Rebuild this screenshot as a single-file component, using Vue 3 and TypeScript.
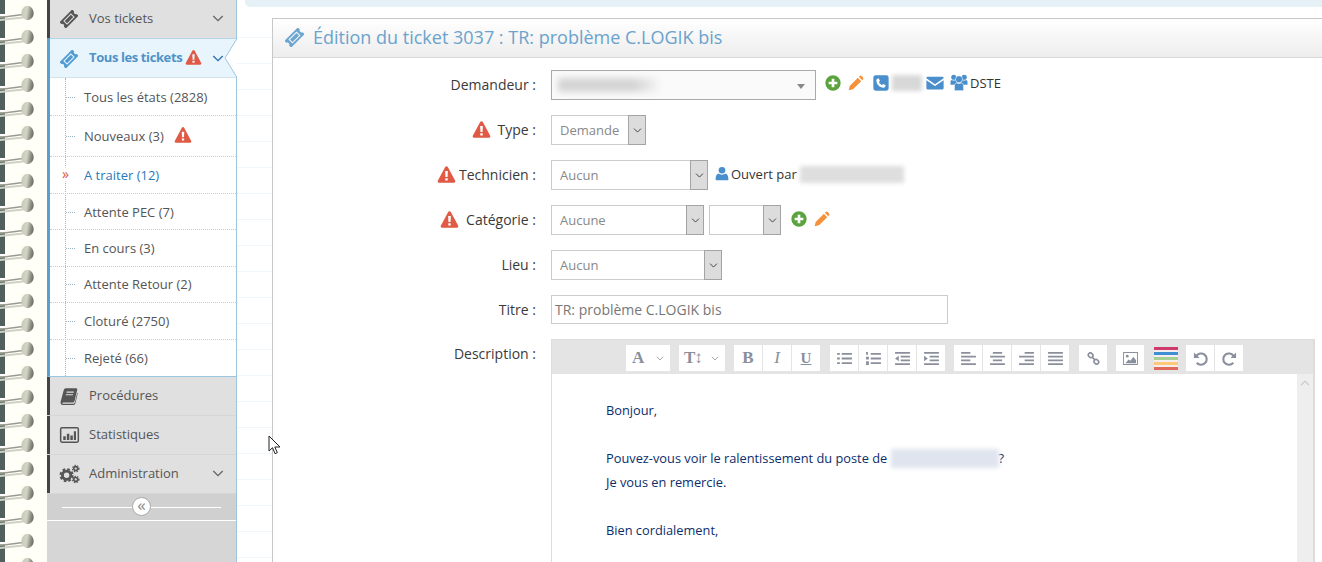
<script setup lang="ts">
interface SubItem { label: string; h: number; warn?: boolean; active?: boolean }
const subItems: SubItem[] = [
  { label: 'Tous les états (2828)', h: 38 },
  { label: 'Nouveaux (3)', h: 41, warn: true },
  { label: 'A traiter (12)', h: 37, active: true },
  { label: 'Attente PEC (7)', h: 36.4 },
  { label: 'En cours (3)', h: 36.4 },
  { label: 'Attente Retour (2)', h: 36.4 },
  { label: 'Cloturé (2750)', h: 36.4 },
  { label: 'Rejeté (66)', h: 36.4 },
]
</script>

<template>
  <div class="page">
    <svg class="defs" width="0" height="0">
      <symbol id="i-ticket" viewBox="0 0 24 24">
        <g transform="rotate(-45 12 12)">
          <path fill-rule="evenodd" d="M0 6h24v3.600a2.500 2.500 0 0 0 0 4.800V18H0v-3.600a2.500 2.500 0 0 0 0-4.800z M4.800 8.400v7.200h14.400V8.400z" />
          <rect x="6.200" y="9.800" width="11.600" height="4.400" />
        </g>
      </symbol>
      <symbol id="i-warn" viewBox="0 0 24 24">
        <path fill-rule="evenodd" d="M12 1.500c.7 0 1.300.4 1.600.9l10 18.600c.6 1.100-.2 2.500-1.500 2.500H1.900c-1.300 0-2.100-1.400-1.500-2.500l10-18.600c.3-.5.900-.9 1.600-.9z M10.200 8h3.600l-.4 8h-2.800z M10.400 17.600h3.200v3h-3.200z" />
      </symbol>
      <symbol id="i-plus" viewBox="0 0 24 24">
        <path fill-rule="evenodd" d="M12 .5a11.500 11.500 0 1 0 0 23a11.500 11.500 0 0 0 0-23z M10 5.500h4v4.500h4.500v4H14v4.500h-4V14H5.500v-4H10z" />
      </symbol>
      <symbol id="i-pencil" viewBox="0 0 24 24">
        <path d="M2.500 16.500 14.800 4.200l5 5L7.500 21.500 1 23z M16.300 2.700l1.300-1.300a2 2 0 0 1 2.800 0l2.200 2.200a2 2 0 0 1 0 2.800l-1.300 1.300z" />
      </symbol>
      <symbol id="i-phone" viewBox="0 0 24 24">
        <path fill-rule="evenodd" d="M4 .5h16A3.500 3.500 0 0 1 23.500 4v16a3.500 3.500 0 0 1-3.500 3.500H4A3.500 3.500 0 0 1 .5 20V4A3.500 3.500 0 0 1 4 .5z M8.500 5 6.800 5.600C5.500 6.200 5 7.200 5 8.500 5.300 14 10 18.700 15.500 19c1.300 0 2.300-.5 2.900-1.800l.6-1.700-4-2-1.500 1.700c-2-.8-3.900-2.700-4.700-4.700L10.500 9z" />
      </symbol>
      <symbol id="i-mail" viewBox="0 0 24 24">
        <path d="M2 3.500h20A1.500 1.500 0 0 1 23.500 5v.8L12 13.500.5 5.800V5A1.500 1.500 0 0 1 2 3.500z M.5 8.300 12 16l11.500-7.700V19a1.500 1.500 0 0 1-1.500 1.500H2A1.500 1.500 0 0 1 .5 19z" />
      </symbol>
      <symbol id="i-users" viewBox="0 0 24 24">
        <circle cx="4.600" cy="4.500" r="3.600" />
        <circle cx="19.400" cy="4.500" r="3.600" />
        <path d="M0 15v-3.500C0 9.500 1 8.500 2 8.500c1.600 1 3.400 1 5 0 1 0 2 1 2 3V15z M15 15v-3.500c0-2 1-3 2-3 1.600 1 3.400 1 5 0 1 0 2 1 2 3V15z" />
        <circle cx="12" cy="7.500" r="5" stroke="#fff" stroke-width=".8" />
        <path d="M5.500 23.500v-6c0-3 1.300-4.700 3.200-5 1.900 1.300 4.700 1.300 6.600 0 1.900.3 3.200 2 3.200 5v6z" stroke="#fff" stroke-width=".8" />
      </symbol>
      <symbol id="i-user" viewBox="0 0 24 24">
        <circle cx="12" cy="6.500" r="5.700" />
        <path d="M2.500 23.500c-.8 0-1.500-.6-1.500-1.500 0-5 1.500-9 5-9.800 1.500 1.300 3.700 2 6 2s4.500-.7 6-2c3.500.8 5 4.800 5 9.800 0 .9-.7 1.500-1.500 1.500z" />
      </symbol>
      <symbol id="i-book" viewBox="0 0 24 24">
        <path fill-rule="evenodd" d="M8 1.500h13.500c1.200 0 1.800 1 1.500 2l-3.600 15c-.3 1.200-1.100 2-2.400 2H4.500c-1 0-1.500.5-1.500 1s.5.9 1.500.9h13c1.200 0 2-.7 2.400-2L23 7.600l.7.800-3.200 13.400c-.3 1.300-1.400 2.200-2.700 2.200H4c-2.200 0-3.800-2-3.200-4.500L5 4c.4-1.500 1.500-2.500 3-2.500z M9 6l-.4 1.600h9.500L18.500 6z M8 9.500l-.4 1.600h9.500l.4-1.600z" />
      </symbol>
      <symbol id="i-stats" viewBox="0 0 24 24">
        <path fill-rule="evenodd" d="M3 2.500h18a2.500 2.500 0 0 1 2.500 2.500v14a2.500 2.500 0 0 1-2.500 2.500H3A2.500 2.500 0 0 1 .5 19V5A2.500 2.500 0 0 1 3 2.500z M3 4.300a.7.700 0 0 0-.7.700v14c0 .4.300.7.700.7h18c.4 0 .7-.3.700-.7V5a.7.700 0 0 0-.7-.7z" />
        <path d="M4.500 13.500h3v4.500h-3z M8.800 10.500h3V18h-3z M13 12.500h3V18h-3z M17.200 7.500h2.600V18h-2.600z" />
      </symbol>
      <symbol id="i-cogs" viewBox="0 0 24 24">
        <circle cx="8.500" cy="13.500" r="5" fill="none" stroke="currentColor" stroke-width="3.400" />
        <circle cx="8.500" cy="13.500" r="7.300" fill="none" stroke="currentColor" stroke-width="2.400" stroke-dasharray="3.200 2.530" />
        <circle cx="19.500" cy="5.500" r="2.300" fill="none" stroke="currentColor" stroke-width="2" />
        <circle cx="19.500" cy="5.500" r="3.800" fill="none" stroke="currentColor" stroke-width="1.500" stroke-dasharray="1.700 1.480" />
        <circle cx="19.500" cy="18.500" r="2.300" fill="none" stroke="currentColor" stroke-width="2" />
        <circle cx="19.500" cy="18.500" r="3.800" fill="none" stroke="currentColor" stroke-width="1.500" stroke-dasharray="1.700 1.480" />
      </symbol>
      <symbol id="i-chev" viewBox="0 0 14 8">
        <path d="M1.500 1 7 6.500 12.500 1" fill="none" stroke="currentColor" stroke-width="1.600" />
      </symbol>
    </svg>

    <svg class="spiral" width="47" height="562">
      <defs>
        <linearGradient id="ball" x1="0" x2="1" y1=".3" y2=".5">
          <stop offset="0" stop-color="#c8cab8" />
          <stop offset=".45" stop-color="#d2d4c4" />
          <stop offset=".75" stop-color="#92948a" />
          <stop offset="1" stop-color="#66685e" />
        </linearGradient>
        <filter id="soft" x="-20%" y="-20%" width="140%" height="140%">
          <feGaussianBlur stdDeviation=".5" />
        </filter>
        <pattern id="ring" width="47" height="24" patternUnits="userSpaceOnUse" y="0">
          <rect width="47" height="24" fill="#fffff8" />
          <rect width="5" height="24" fill="#50605c" />
          <rect y="14" width="5" height="2.500" fill="#fff" />
          <g filter="url(#soft)">
            <path d="M0 17.500 23 14.500" stroke="#9a9c8e" stroke-width="1.600" />
            <path d="M0 20 23 17.500" stroke="#d0d2c6" stroke-width="2" />
            <ellipse cx="27.500" cy="13" rx="6.200" ry="7.200" fill="url(#ball)" />
          </g>
        </pattern>
      </defs>
      <rect width="47" height="562" fill="url(#ring)" />
    </svg>

    <aside class="sidebar">
      <div class="nav-item first">
        <svg class="nav-ico"><use href="#i-ticket" /></svg>
        <span class="nav-label">Vos tickets</span>
        <svg class="chev"><use href="#i-chev" /></svg>
      </div>

      <div class="nav-active">
        <svg class="nav-ico blue"><use href="#i-ticket" /></svg>
        <span class="active-label">Tous les tickets</span>
        <svg class="warn-s"><use href="#i-warn" /></svg>
        <svg class="chev navy"><use href="#i-chev" /></svg>
        <svg class="notch" width="13" height="39" viewBox="0 0 13 39">
          <path d="M13 0 1 19.500 13 39z" fill="#fff" />
          <path d="M13 0 1 19.500 13 39" fill="none" stroke="#9cc5e0" />
        </svg>
      </div>

      <ul class="sub">
        <li
          v-for="s in subItems"
          :key="s.label"
          class="sub-row"
          :class="{ on: s.active }"
          :style="{ height: s.h + 'px' }"
        >
          <span v-if="s.active" class="marks">»</span>
          <span v-else class="tick"></span>
          <span>{{ s.label }}</span>
          <svg v-if="s.warn" class="warn-n"><use href="#i-warn" /></svg>
        </li>
      </ul>

      <div class="nav-item">
        <svg class="nav-ico"><use href="#i-book" /></svg>
        <span class="nav-label">Procédures</span>
      </div>
      <div class="nav-item">
        <svg class="nav-ico wide"><use href="#i-stats" /></svg>
        <span class="nav-label">Statistiques</span>
      </div>
      <div class="nav-item">
        <svg class="nav-ico wide"><use href="#i-cogs" /></svg>
        <span class="nav-label">Administration</span>
        <svg class="chev"><use href="#i-chev" /></svg>
      </div>

      <div class="collapse">
        <span class="knob">«</span>
      </div>
    </aside>

    <main class="main">
      <div class="topbar"></div>
      <section class="panel">
        <header class="panel-head">
          <svg class="head-ico"><use href="#i-ticket" /></svg>
          <h1>Édition du ticket 3037 : TR: problème C.LOGIK bis</h1>
        </header>

        <div class="form">
          <div class="row">
            <label class="lab">Demandeur :</label>
            <div class="combo">
              <span class="blur b-req"></span>
              <span class="caret"></span>
            </div>
            <div class="extras e-req">
              <svg class="ic green"><use href="#i-plus" /></svg>
              <svg class="ic orange"><use href="#i-pencil" /></svg>
              <svg class="ic blue ml9"><use href="#i-phone" /></svg>
              <span class="blur b-phone"></span>
              <svg class="ic mail blue"><use href="#i-mail" /></svg>
              <svg class="ic users blue"><use href="#i-users" /></svg>
              <span class="small">DSTE</span>
            </div>
          </div>

          <div class="row">
            <label class="lab"><svg class="warn"><use href="#i-warn" /></svg><span class="g7">Type :</span></label>
            <div class="sel w95"><span>Demande</span><i class="arrow"><svg><use href="#i-chev" /></svg></i></div>
          </div>

          <div class="row">
            <label class="lab"><svg class="warn"><use href="#i-warn" /></svg><span class="g3">Technicien :</span></label>
            <div class="sel w157"><span>Aucun</span><i class="arrow"><svg><use href="#i-chev" /></svg></i></div>
            <div class="extras e-tech">
              <svg class="ic user blue"><use href="#i-user" /></svg>
              <span class="small">Ouvert par</span>
              <span class="blur b-open"></span>
            </div>
          </div>

          <div class="row">
            <label class="lab"><svg class="warn"><use href="#i-warn" /></svg><span class="g7">Catégorie :</span></label>
            <div class="sel w153"><span>Aucune</span><i class="arrow"><svg><use href="#i-chev" /></svg></i></div>
            <div class="sel w72 ml5"><span></span><i class="arrow"><svg><use href="#i-chev" /></svg></i></div>
            <div class="extras e-cat">
              <svg class="ic green"><use href="#i-plus" /></svg>
              <svg class="ic orange"><use href="#i-pencil" /></svg>
            </div>
          </div>

          <div class="row">
            <label class="lab">Lieu :</label>
            <div class="sel w171"><span>Aucun</span><i class="arrow"><svg><use href="#i-chev" /></svg></i></div>
          </div>

          <div class="row">
            <label class="lab">Titre :</label>
            <div class="title-input">TR: problème C.LOGIK bis</div>
          </div>

          <div class="row desc">
            <label class="lab">Description :</label>
            <div class="editor">
              <div class="toolbar">
                <div class="grp">
                  <span class="btn w44 serif big">A<svg class="mini"><use href="#i-chev" /></svg></span>
                </div>
                <div class="grp g9">
                  <span class="btn w47 serif big">T↕<svg class="mini"><use href="#i-chev" /></svg></span>
                </div>
                <div class="grp g9">
                  <span class="btn serif big bold">B</span>
                  <span class="btn serif big ital">I</span>
                  <span class="btn serif under">U</span>
                </div>
                <div class="grp g10">
                  <span class="btn">
                    <svg class="tb" viewBox="0 0 16 14"><path d="M0 1h3v2H0z M5 1h11v2H5z M0 6h3v2H0z M5 6h11v2H5z M0 11h3v2H0z M5 11h11v2H5z" /></svg>
                  </span>
                  <span class="btn">
                    <svg class="tb" viewBox="0 0 16 14"><path d="M0 0h2v3H0z M0 5h3v3H0z M0 10h3v4H0z M5 1h11v2H5z M5 6h11v2H5z M5 11h11v2H5z" /></svg>
                  </span>
                  <span class="btn">
                    <svg class="tb" viewBox="0 0 16 14"><path d="M0 0h16v2H0z M6 4h10v2H6z M6 8h10v2H6z M0 12h16v2H0z M4 4v6L0 7z" /></svg>
                  </span>
                  <span class="btn">
                    <svg class="tb" viewBox="0 0 16 14"><path d="M0 0h16v2H0z M6 4h10v2H6z M6 8h10v2H6z M0 12h16v2H0z M0 4v6l4-3z" /></svg>
                  </span>
                </div>
                <div class="grp g9">
                  <span class="btn">
                    <svg class="tb" viewBox="0 0 16 14"><path d="M0 0h10v2H0z M0 4h16v2H0z M0 8h10v2H0z M0 12h16v2H0z" /></svg>
                  </span>
                  <span class="btn">
                    <svg class="tb" viewBox="0 0 16 14"><path d="M3 0h10v2H3z M0 4h16v2H0z M3 8h10v2H3z M0 12h16v2H0z" /></svg>
                  </span>
                  <span class="btn">
                    <svg class="tb" viewBox="0 0 16 14"><path d="M6 0h10v2H6z M0 4h16v2H0z M6 8h10v2H6z M0 12h16v2H0z" /></svg>
                  </span>
                  <span class="btn">
                    <svg class="tb" viewBox="0 0 16 14"><path d="M0 0h16v2H0z M0 4h16v2H0z M0 8h16v2H0z M0 12h16v2H0z" /></svg>
                  </span>
                </div>
                <div class="grp g10">
                  <span class="btn">
                    <svg class="tb" viewBox="0 0 16 16"><g fill="none" stroke="#8a8f9c" stroke-width="2"><rect x="1.500" y="1.500" width="6" height="5" rx="2.500" transform="rotate(45 4.500 4)" /><rect x="8.500" y="9.500" width="6" height="5" rx="2.500" transform="rotate(45 11.500 12)" /><path d="M6 6l4 4" /></g></svg>
                  </span>
                </div>
                <div class="grp g9">
                  <span class="btn">
                    <svg class="tb" viewBox="0 0 16 14"><path fill-rule="evenodd" d="M0 0h16v14H0z M1 1v12h14V1z" /><circle cx="4.500" cy="4.500" r="1.500" /><path d="M2.500 12 6 8l2 1.500L11 5l3 4v3z" /></svg>
                  </span>
                </div>
                <div class="colors">
                  <i style="background: #cf3a6c"></i>
                  <i style="background: #3f8fd2"></i>
                  <i style="background: #a6cf96"></i>
                  <i style="background: #fdc877"></i>
                  <i style="background: #e06a5a"></i>
                </div>
                <div class="grp g8">
                  <span class="btn">
                    <svg class="tb hist" viewBox="0 0 16 16"><path d="M3.500 5.500A6 6 0 1 1 4 12.500" fill="none" stroke="#8a8f9c" stroke-width="2.200" /><path d="M1 1.500v6h6z" /></svg>
                  </span>
                  <span class="btn">
                    <svg class="tb hist" viewBox="0 0 16 16"><path d="M12.500 5.500A6 6 0 1 0 12 12.500" fill="none" stroke="#8a8f9c" stroke-width="2.200" /><path d="M15 1.500v6H9z" /></svg>
                  </span>
                </div>
              </div>
              <div class="edit-body">
                <div class="content">
                  <p>Bonjour,</p>
                  <p>&nbsp;</p>
                  <p>Pouvez-vous voir le ralentissement du poste de <span class="blur b-name"></span>?</p>
                  <p>Je vous en remercie.</p>
                  <p>&nbsp;</p>
                  <p>Bien cordialement,</p>
                </div>
                <div class="scroll">
                  <svg class="up"><use href="#i-chev" /></svg>
                </div>
              </div>
            </div>
          </div>
        </div>
      </section>
    </main>

    <svg class="cursor" width="13" height="20" viewBox="0 0 13 20">
      <path d="M1 1v15l3.500-3.300 2.500 6 2.300-1-2.500-5.700H12z" fill="#fff" stroke="#222" stroke-width="1" stroke-linejoin="round" />
    </svg>
  </div>
</template>

<style scoped>
.page {
  position: relative;
  display: flex;
  width: 1322px;
  height: 562px;
  overflow: hidden;
  font-family: "Open Sans", "Noto Sans", sans-serif;
  background: #fff;
  color: #444;
}
.defs { position: absolute; }
.spiral { flex: none; display: block; }

/* sidebar */
.sidebar {
  flex: none;
  width: 190px;
  height: 562px;
  box-sizing: border-box;
  background: #d6d6d6;
  border-right: 1px solid #9cc5e0;
  display: flex;
  flex-direction: column;
}
.nav-item {
  flex: none;
  height: 38px;
  box-sizing: border-box;
  margin-bottom: 1px;
  padding-bottom: 2px;
  display: flex;
  align-items: center;
  background: #e0e0e0;
  border-left: 3px solid #444;
  position: relative;
  font-size: 13px;
  color: #555;
}
.nav-item.first { height: 38px; margin-bottom: 0; }
.nav-ico {
  position: absolute;
  left: 10px;
  top: 10px;
  width: 18px;
  height: 18px;
  fill: #555;
  color: #555;
}
.nav-ico.wide { left: 9px; width: 21px; height: 20px; top: 9px; }
.nav-ico.blue { fill: #4f9bd2; left: 13px; top: 11px; }
.nav-label { margin-left: 39px; }
.chev {
  position: absolute;
  right: 12px;
  top: 15px;
  width: 12px;
  height: 7px;
  color: #666;
}
.chev.navy { color: #2a6eb0; top: 16px; }
.nav-active {
  flex: none;
  height: 40px;
  box-sizing: border-box;
  position: relative;
  display: flex;
  align-items: center;
  background: #e8f5fd;
  border-top: 1px solid #b4d4ea;
  border-bottom: 1px solid #d4e2ec;
  font-size: 13px;
  font-weight: 700;
  color: #4f93c8;
}
.nav-active::before {
  content: "";
  position: absolute;
  left: 0;
  top: -1px;
  bottom: -1px;
  width: 3px;
  background: #5a9fd0;
}
.active-label { margin-left: 42px; letter-spacing: -0.4px; position: relative; top: -1px; }
.warn-s { width: 17px; height: 16px; fill: #e05a45; margin-left: 3px; margin-top: -2px; }
.notch { position: absolute; right: -1px; top: -1px; height: 40px; }
.sub {
  list-style: none;
  margin: 0;
  padding: 0;
  flex: none;
  background: #fff;
  border-left: 3px solid #5a9fd0;
  border-bottom: 1px solid #9cc5e0;
  position: relative;
  font-size: 13px;
  color: #555;
}
.sub::before {
  content: "";
  position: absolute;
  left: 15px;
  top: 0;
  bottom: 0;
  border-left: 1px dotted #9db4c4;
}
.sub-row {
  display: flex;
  align-items: center;
  box-sizing: border-box;
  padding-left: 34px;
  position: relative;
  border-bottom: 1px dotted #ccc;
}
.sub-row:last-child { border-bottom: 0; }
.sub-row.on { color: #2a7ab8; }
.tick {
  position: absolute;
  left: 16px;
  top: 50%;
  width: 9px;
  border-top: 1px dotted #9db4c4;
}
.marks {
  position: absolute;
  left: 12px;
  top: 50%;
  transform: translateY(-54%);
  width: 8px;
  background: #fff;
  color: #d9583f;
  font-size: 14px;
  line-height: 14px;
  font-weight: 400;
}
.warn-n { width: 18px; height: 17px; fill: #e05a45; margin-left: 10px; margin-top: -3px; }
.collapse {
  flex: none;
  height: 27px;
  box-sizing: border-box;
  background: #d0d0d0;
  border-bottom: 1px solid #fff;
  display: flex;
  align-items: center;
  justify-content: center;
  position: relative;
}
.collapse::before {
  content: "";
  position: absolute;
  left: 15px;
  right: 15px;
  top: 13px;
  border-top: 1px solid #fff;
}
.knob {
  position: relative;
  width: 19px;
  height: 19px;
  box-sizing: border-box;
  border: 1px solid #aaa;
  border-radius: 50%;
  background: #fff;
  color: #888;
  font-size: 17px;
  line-height: 14px;
  text-align: center;
}

/* main */
.main {
  flex: 1;
  min-width: 0;
  height: 562px;
  padding-left: 8px;
  box-sizing: border-box;
  background: repeating-linear-gradient(to bottom, #fff 0, #fff 25px, #f1f6fa 25px, #f1f6fa 26px) 0 12px;
}
.topbar {
  height: 7px;
  background: #e6f0f7;
  border-bottom-left-radius: 5px;
  margin-bottom: 11px;
}
.panel {
  margin-left: 27px;
  width: 1100px;
  height: 544px;
  box-sizing: border-box;
  border-top: 1px solid #c8c8c8;
  border-left: 1px solid #c8c8c8;
  background: #fff;
}
.panel-head {
  height: 39px;
  box-sizing: border-box;
  display: flex;
  align-items: center;
  background: linear-gradient(to bottom, #fff, #ededed);
  border-bottom: 1px solid #d8d8d8;
  padding: 0 0 2px 12px;
}
.head-ico { width: 19px; height: 19px; fill: #6ba5d0; flex: none; }
h1 {
  margin: 0 0 0 9px;
  font-size: 18px;
  font-weight: 400;
  color: #6ba3cc;
  white-space: nowrap;
}
.form { padding-top: 12px; }
.row {
  display: flex;
  align-items: center;
  height: 30px;
  margin-bottom: 15px;
  font-size: 13px;
}
.lab {
  flex: none;
  width: 263px;
  margin-right: 15px;
  padding-bottom: 2px;
  display: flex;
  justify-content: flex-end;
  align-items: center;
  font-size: 14px;
  color: #3a3a3a;
}
.warn { width: 19px; height: 18px; fill: #e05a45; margin-top: -1px; }
.g7 { margin-left: 7px; }
.g3 { margin-left: 3px; }
.combo {
  width: 265px;
  height: 30px;
  box-sizing: border-box;
  border: 1px solid #aaa;
  background: #fafafa;
  position: relative;
  display: flex;
  align-items: center;
}
.blur {
  display: inline-block;
  background: #c8c8c8;
  filter: blur(2px);
}
.b-req { width: 100px; height: 14px; margin-left: 6px; filter: blur(3px); background: linear-gradient(to right, #d4d4d4 75%, #f2f2f2); }
.caret {
  position: absolute;
  right: 10px;
  top: 13px;
  border: 4px solid transparent;
  border-top: 5px solid #888;
  border-bottom: 0;
}
.extras { display: flex; align-items: center; }
.e-req { margin-left: 9px; margin-top: -5px; }
.e-tech { margin-left: 7px; margin-top: -2px; }
.e-cat { margin-left: 10px; margin-top: -3px; }
.ic { width: 16px; height: 16px; flex: none; }
.ic.user { width: 14px; height: 15px; margin-top: -1px; }
.ic.orange { margin-left: 7px; }
.green { fill: #5ba33e; }
.orange { fill: #f5913a; }
.blue { fill: #4a8fcc; }
.ml9 { margin-left: 9px; }
.b-phone { width: 30px; height: 16px; margin-left: 3px; background: #d8d8d8; }
.ic.mail { width: 18px; height: 18px; margin-left: 4px; }
.ic.users { width: 18px; height: 17px; margin-left: 6px; }
.small { font-size: 13px; color: #333; margin-left: 2px; }
.e-tech .small { margin-left: 2px; }
.b-open { width: 104px; height: 17px; margin-left: 3px; background: #dedede; }
.sel {
  height: 30px;
  box-sizing: border-box;
  border: 1px solid #ccc;
  background: #fff;
  display: flex;
  align-items: center;
  justify-content: space-between;
  color: #888;
  padding-left: 8px;
  flex: none;
}
.w95 { width: 95px; }
.w157 { width: 157px; }
.w153 { width: 153px; }
.w72 { width: 72px; }
.w171 { width: 171px; }
.ml5 { margin-left: 5px; }
.arrow {
  width: 18px;
  height: 30px;
  box-sizing: border-box;
  margin: 0 -1px 0 0;
  border: 1px solid #a4a4a4;
  background: #dcdcdc;
  display: flex;
  align-items: center;
  justify-content: center;
  color: #444;
}
.arrow svg { width: 9px; height: 5px; }
.title-input {
  width: 397px;
  height: 29px;
  box-sizing: border-box;
  align-self: flex-start;
  border: 1px solid #ccc;
  padding-left: 3px;
  line-height: 27px;
  font-size: 14px;
  color: #777;
}
.row.desc { align-items: flex-start; height: auto; margin-top: -1px; margin-bottom: 0; }
.row.desc .lab { padding: 5px 0 0; }
.editor {
  width: 764px;
  height: 224px;
  box-sizing: border-box;
  border: 1px solid #ddd;
  border-right: 2px solid #ddd;
}
.toolbar {
  height: 34px;
  background: #e4e4e4;
  display: flex;
  align-items: flex-start;
  padding: 5px 0 0 74px;
  box-sizing: border-box;
}
.grp { display: flex; gap: 1px; background: transparent; }
.g8 { margin-left: 8px; }
.g9 { margin-left: 9px; }
.g10 { margin-left: 10px; }
.btn {
  width: 28px;
  height: 26px;
  background: #fff;
  color: #8a8f9c;
  display: flex;
  align-items: center;
  justify-content: center;
  font-size: 14px;
  position: relative;
}
.w44 { width: 44px; justify-content: flex-start; padding-left: 6px; box-sizing: border-box; }
.w47 { width: 46px; justify-content: flex-start; padding-left: 5px; box-sizing: border-box; }
.serif { font-family: "Liberation Serif", serif; }
.big { font-size: 17px; }
.bold { font-weight: 700; }
.w44.big, .w47.big { font-weight: 700; letter-spacing: -1px; }
.ital { font-style: italic; }
.under { font-size: 15px; font-weight: 700; text-decoration: underline; }
.mini { position: absolute; right: 6px; top: 11px; width: 8px; height: 5px; color: #999; }
.tb { width: 15px; height: 13px; fill: #8a8f9c; }
.tb.hist { width: 15px; height: 15px; }
.colors {
  margin-left: 10px;
  width: 24px;
  height: 23px;
  display: flex;
  flex-direction: column;
  justify-content: space-between;
  margin-top: 2px;
  background: #f4eeee;
}
.colors i { display: block; height: 3px; }
.edit-body {
  display: flex;
  height: 188px;
}
.content {
  flex: 1;
  padding: 24px 0 0 54px;
  color: #0b2e6b;
  font-size: 12.800px;
  line-height: 24px;
}
.content p { margin: 0; }
.b-name { width: 108px; height: 19px; vertical-align: -5px; background: #dfe4ee; }
.scroll {
  width: 16px;
  background: #eee;
  display: flex;
  justify-content: center;
  color: #c4c4c4;
}
.up { width: 10px; height: 6px; margin-top: 6px; transform: rotate(180deg); }
.cursor { position: absolute; left: 268px; top: 435px; }
</style>
